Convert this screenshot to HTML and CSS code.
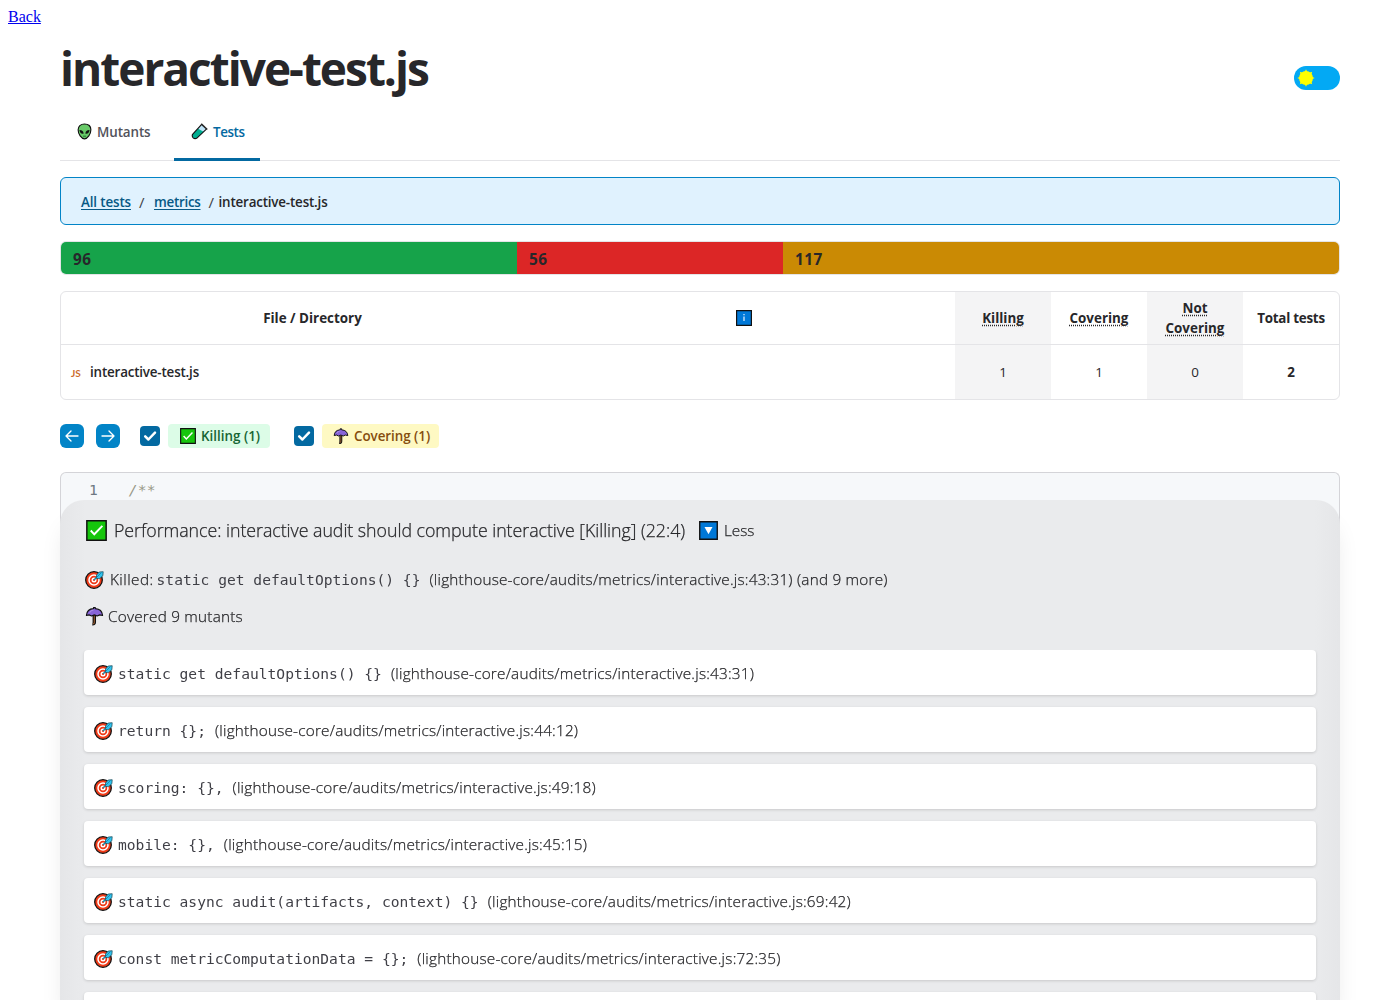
FILE: index.html
```html
<!DOCTYPE html>
<html lang="en">
<head>
<meta charset="utf-8">
<title>interactive-test.js</title>
<link rel="stylesheet" href="styles.css">
</head>
<body>
<svg class="defs" width="0" height="0" aria-hidden="true">
  <symbol id="target" viewBox="0 0 20 20">
    <circle cx="9" cy="11" r="8.3" fill="#f03a17" stroke="#111" stroke-width="1.3"/>
    <circle cx="9" cy="11" r="5" fill="none" stroke="#fff" stroke-width="1.5"/>
    <circle cx="9" cy="11" r="1.8" fill="#f03a17" stroke="#fff" stroke-width="1.4"/>
    <path d="M9 11 14 6" stroke="#1689a8" stroke-width="1.6"/>
    <path d="M11.5 8.5V6L14.2 3l4-.3-.3 4-3.2 2.900h-2.700z" fill="#31c3ee" stroke="#174450" stroke-width=".7"/>
    <path d="m11.5 8.5 5-5" stroke="#117da5" stroke-width=".8"/>
  </symbol>
  <symbol id="umbrella" viewBox="0 0 20 20">
    <path d="M9.8 9v7.5q0 2-2 1.8" fill="none" stroke="#111" stroke-width="3.6"/>
    <path d="M9.8 9v7.5q0 1.7-1.6 1.6" fill="none" stroke="#8e562e" stroke-width="1.3"/>
    <path d="M1.5 9.5Q2 2.6 9 2.3V1h1.8v1.3Q18 2.8 18.5 9.5L15.5 8.8 12.8 10 9.8 8.8 7 10 4.3 8.8z" fill="#8764d8" stroke="#111" stroke-width="1.2" stroke-linejoin="round"/>
    <path d="M5 6.5Q6 4 9 3.6" stroke="#ae95ed" fill="none"/>
  </symbol>
  <symbol id="check" viewBox="0 0 20 20">
    <path d="M.8.8h18.4v18.4H.8z" fill="#16c60c" stroke="#111" stroke-width="1.4"/>
    <path d="m4.5 10 3.4 3.6 7.7-8" fill="none" stroke="#fff" stroke-width="1.8"/>
  </symbol>
</svg>

<a class="back" href="#">Back</a>

<main class="page">
  <header class="title-row">
    <h1>interactive-test.js</h1>
    <div class="theme-switch">
      <svg viewBox="0 0 20 20" width="18" height="18"><circle cx="10" cy="10" r="7.8" fill="#ff0"/><path d="m10 .3 1.5 3h-3zM10 19.7l1.5-3h-3zM.3 10l3-1.5v3zM19.7 10l-3-1.5v3zM3.1 3.1l3.2 1-2.200 2.200zM16.900 3.100l-1 3.200-2.200-2.200zM3.100 16.900l1-3.200 2.200 2.200zM16.900 16.900l-3.200-1 2.200-2.200z" fill="#ff0"/></svg>
    </div>
  </header>

  <nav class="tabs">
    <a class="tab"><svg viewBox="0 0 16 18" width="15" height="17"><path d="M8 1C3.8 1 1.2 3.5 1.2 7.200c0 4.600 3.500 9.600 6.800 9.600s6.800-5 6.800-9.600C14.800 3.500 12.200 1 8 1z" fill="#68c968" stroke="#111" stroke-width="1.2"/><path d="M2.600 7.500Q7 7.500 7 11.300 3.200 12 2.600 7.500zM13.400 7.500Q9 7.500 9 11.300 12.800 12 13.400 7.500z" fill="#111"/><path d="M6.500 14h3" stroke="#176b2c"/></svg><span>Mutants</span></a>
    <a class="tab active"><svg viewBox="0 0 18 18" width="17" height="17"><path d="M11.300 1.500 1.700 12Q.7 14 2.300 15.700 4 17.200 6 16.200L16.300 6.500z" fill="#bfe3f7"/><path d="M7.500 6.200 13.300 9.200 6 16.200Q4 17.200 2.300 15.700.7 14 1.700 12z" fill="#00ae91"/><path d="M11.300 1.500 1.700 12Q.7 14 2.300 15.700 4 17.200 6 16.200L16.300 6.500" fill="none" stroke="#111" stroke-width="1.2"/><path d="m10.800.9 6.400 6" stroke="#222" stroke-width="1.6"/></svg><span>Tests</span></a>
  </nav>

  <nav class="crumbs">
    <a>All tests</a><i>/</i><a class="metrics">metrics</a><i class="last">/</i><b>interactive-test.js</b>
  </nav>

  <div class="bar">
    <div class="seg green" style="width:456px">96</div>
    <div class="seg red" style="width:266px">56</div>
    <div class="seg amber">117</div>
  </div>

  <div class="table">
    <div class="row head">
      <div class="name"><span>File / Directory</span></div>
      <div class="info"><svg viewBox="0 0 16 16" width="16" height="16"><path d="M.6.6h14.8v14.8H.6z" fill="#0078d7" stroke="#111" stroke-width="1.2"/><path d="M8 4v1.200M8 6.400V11" stroke="#fff" stroke-width="1.1"/></svg></div>
      <div class="num shade"><abbr>Killing</abbr></div>
      <div class="num"><abbr>Covering</abbr></div>
      <div class="num shade"><abbr>Not Covering</abbr></div>
      <div class="num sum"><span>Total tests</span></div>
    </div>
    <div class="row">
      <div class="file"><small>JS</small><span>interactive-test.js</span></div>
      <div class="num shade">1</div>
      <div class="num">1</div>
      <div class="num shade">0</div>
      <div class="num total">2</div>
    </div>
  </div>

  <div class="controls">
    <button class="arrow"><svg viewBox="0 0 24 24" width="16" height="16"><path d="M10.500 4.500 3 12l7.500 7.500M3 12h18"/></svg></button>
    <button class="arrow"><svg viewBox="0 0 24 24" width="16" height="16"><path d="m13.500 4.500 7.500 7.500-7.500 7.500M21 12H3"/></svg></button>
    <span class="box"><svg viewBox="0 0 20 20" width="20" height="20"><path d="m5.200 10.300 3.200 3.200L15 6.700"/></svg></span>
    <span class="pill killing"><svg width="16" height="16"><use href="#check"/></svg><span>Killing (1)</span></span>
    <span class="box second"><svg viewBox="0 0 20 20" width="20" height="20"><path d="m5.200 10.300 3.200 3.200L15 6.700"/></svg></span>
    <span class="pill covering"><svg width="16" height="16"><use href="#umbrella"/></svg><span>Covering (1)</span></span>
  </div>

  <div class="code"><span class="line">1</span><span class="comment">/**</span></div>
</main>

<aside class="drawer">
  <div class="summary"><svg width="21" height="21"><use href="#check"/></svg><span class="headline">Performance: interactive audit should compute interactive [Killing] (22:4)</span><svg class="toggle" viewBox="0 0 18 18" width="19" height="19"><path d="M.7.7h16.600v16.600H.7z" fill="#0078d7" stroke="#111" stroke-width="1.3"/><path d="M5.200 5.800h7.600L9 12.500z" fill="#fff"/></svg><span>Less</span></div>
  <div class="detail killed"><svg width="20" height="20"><use href="#target"/></svg><span class="verb">Killed:</span><code>static get defaultOptions() {}</code><span class="path">(lighthouse-core/audits/metrics/interactive.js:43:31) (and 9 more)</span></div>
  <div class="detail covered"><svg width="19" height="20"><use href="#umbrella"/></svg><span>Covered 9 mutants</span></div>
  <div class="cards">
    <div class="card"><svg width="20" height="20"><use href="#target"/></svg><code>static get defaultOptions() {}</code><span class="path">(lighthouse-core/audits/metrics/interactive.js:43:31)</span></div>
    <div class="card"><svg width="20" height="20"><use href="#target"/></svg><code>return {};</code><span class="path">(lighthouse-core/audits/metrics/interactive.js:44:12)</span></div>
    <div class="card"><svg width="20" height="20"><use href="#target"/></svg><code>scoring: {},</code><span class="path">(lighthouse-core/audits/metrics/interactive.js:49:18)</span></div>
    <div class="card"><svg width="20" height="20"><use href="#target"/></svg><code>mobile: {},</code><span class="path">(lighthouse-core/audits/metrics/interactive.js:45:15)</span></div>
    <div class="card"><svg width="20" height="20"><use href="#target"/></svg><code>static async audit(artifacts, context) {}</code><span class="path">(lighthouse-core/audits/metrics/interactive.js:69:42)</span></div>
    <div class="card"><svg width="20" height="20"><use href="#target"/></svg><code>const metricComputationData = {};</code><span class="path">(lighthouse-core/audits/metrics/interactive.js:72:35)</span></div>
    <div class="card"></div>
  </div>
</aside>
</body>
</html>
```
FILE: styles.css
```css
html, body { height: 100%; overflow: hidden; }
body { margin: 0; background: #fff; color: #27272a; font-family: "Open Sans", "Noto Sans", sans-serif; }
* { box-sizing: border-box; }
svg { display: block; flex: none; }
.defs { position: absolute; }
.back { display: block; padding: 8px 8px 0; height: 26px; line-height: 18px; font-family: "Liberation Serif", serif; font-size: 16px; color: #0000ee; }
.page { padding: 0 60px; }
.title-row { display: flex; justify-content: space-between; align-items: flex-start; height: 82px; padding-top: 12px; }
h1 { margin: 0; font-size: 46px; line-height: 60px; font-weight: 700; letter-spacing: -2px; white-space: nowrap; }
.theme-switch { width: 46px; height: 24px; margin-top: 28px; border-radius: 12px; background: #03a9f4; padding: 3px; }
.tabs { display: flex; gap: 8px; height: 53px; border-bottom: 1px solid #e4e4e7; font-size: 13.4px; font-weight: 600; letter-spacing: -.1px; color: #52525b; }
.tab { display: flex; align-items: center; gap: 5px; width: 106px; height: 53px; padding: 0 0 3px 17px; border-bottom: 3px solid transparent; line-height: 20px; }
.tab.active { width: 86px; border-color: #0369a1; color: #0369a1; letter-spacing: -.4px; }
.crumbs { display: flex; align-items: center; height: 48px; margin-top: 16px; padding: 1px 20px 0; border: 1px solid #0284c7; border-radius: 6px; background: #e0f2fe; font-size: 13.4px; font-weight: 600; letter-spacing: -.13px; }
.crumbs a { color: #075985; text-decoration: underline; text-underline-offset: 2px; }
.crumbs .metrics { letter-spacing: -.28px; }
.crumbs i { font-style: normal; font-weight: 400; width: 23px; padding-left: 8px; font-size: 15px; color: #3f3f46; }
.crumbs i.last { width: 18px; }
.crumbs b { font-weight: 600; letter-spacing: -.18px; }
.bar { display: flex; height: 34px; margin-top: 16px; border: 1px solid #e4e4e7; border-radius: 6px; overflow: hidden; }
.seg { padding: 1px 12px 0; font-size: 15.3px; letter-spacing: .5px; font-weight: 700; line-height: 33px; }
.green { background: #16a34a; }
.red { background: #dc2626; }
.amber { background: #ca8a04; flex: 1; }
.table { margin-top: 16px; border: 1px solid #e4e4e7; border-radius: 6px; overflow: hidden; font-size: 13.4px; }
.row { display: flex; height: 54px; }
.head { height: 53px; border-bottom: 1px solid #e4e4e7; font-weight: 700; line-height: 20px; }
.row > div { display: flex; align-items: center; justify-content: center; text-align: center; }
.row .name { width: 503px; }
.row .info { flex: 1; padding-right: 32px; }
.row .num { width: 96px; padding: 0 16px; white-space: normal; }
.row .sum { letter-spacing: -.25px; }
.row .num span { white-space: nowrap; }
.row .shade { background: #f4f4f5; }
.row .total { font-weight: 700; }
abbr { text-decoration: underline dotted; text-underline-offset: 2px; }
.row .file { flex: 1; justify-content: flex-start; padding-left: 10px; font-weight: 600; letter-spacing: -.18px; }
.file small { width: 19px; text-align: left; font: 700 10px "Lato", "Open Sans", sans-serif; letter-spacing: 0; color: #cc6d2e; padding-top: 1px; }
.controls { display: flex; align-items: center; height: 24px; margin-top: 24px; font-size: 13.4px; font-weight: 600; }
.arrow { width: 24px; height: 24px; margin-right: 12px; padding: 4px; border: 0; border-radius: 6px; background: #0284c7; }
.arrow path { fill: none; stroke: #fff; stroke-width: 2; stroke-linecap: round; stroke-linejoin: round; }
.box { width: 20px; height: 20px; margin: 0 8px; border-radius: 4px; background: #0369a1; }
.box.second { margin-left: 24px; }
.box path { fill: none; stroke: #fff; stroke-width: 2.5; stroke-linecap: round; stroke-linejoin: round; }
.pill { display: flex; align-items: center; gap: 5px; height: 24px; border-radius: 4px; padding-left: 12px; white-space: nowrap; }
.killing { width: 102px; background: #dcfce7; color: #166534; }
.covering { width: 117px; padding-left: 11px; letter-spacing: -.04px; background: #fef9c3; color: #854d0e; }
.code { height: 528px; margin-top: 24px; padding: 7px 0 0 28px; border: 1px solid #d4d4d8; border-bottom: 0; border-radius: 6px 6px 0 0; background: #f6f8fa; font: 14.6px/20px "DejaVu Sans Mono", monospace; }
.line { color: #6e7781; margin-right: 31px; }
.comment { color: #999988; font-style: italic; letter-spacing: .2px; }
.drawer { position: fixed; left: 60px; right: 60px; top: 500px; bottom: 0; padding: 0 24px; border-radius: 24px 24px 0 0; background: linear-gradient(90deg, #e5e6e8, #eaebed 2%, #eaebed 98%, #e5e6e8); box-shadow: 0 20px 25px -5px rgba(0,0,0,.1); font-size: 15.3px; font-weight: 300; -webkit-text-stroke: .25px currentColor; white-space: nowrap; }
.summary { display: flex; align-items: center; height: 61px; padding: 0 0 0 2px; }
.summary span { position: relative; top: -1px; }
.headline { width: 571px; margin-left: 7px; font-size: 17.8px; letter-spacing: -.04px; }
.toggle { margin: 0 6px 0 14px; }
.detail { display: flex; align-items: center; height: 37px; padding-bottom: 2px; }
code { font: 14.6px "DejaVu Sans Mono", monospace; letter-spacing: .01px; color: #3f3f46; -webkit-text-stroke: 0; margin-right: 9px; }
.killed { padding-left: 1px; }
.killed .verb { margin: 0 3px 0 5px; letter-spacing: .45px; }
.killed code { padding-top: 1px; }
.path { letter-spacing: .22px; }
.covered { padding-left: 1px; }
.covered span { margin-left: 4px; letter-spacing: .23px; }
.cards { display: flex; flex-direction: column; gap: 12px; margin-top: 15px; height: 350px; overflow: hidden; margin-inline: -4px; padding-inline: 4px; }
.card { display: flex; align-items: center; flex: none; height: 45px; padding: 0 10px; background: #fff; border-radius: 4px; box-shadow: 0 1px 3px rgba(0,0,0,.15); }
.card code { margin-left: 4px; padding-top: 1px; }
```
